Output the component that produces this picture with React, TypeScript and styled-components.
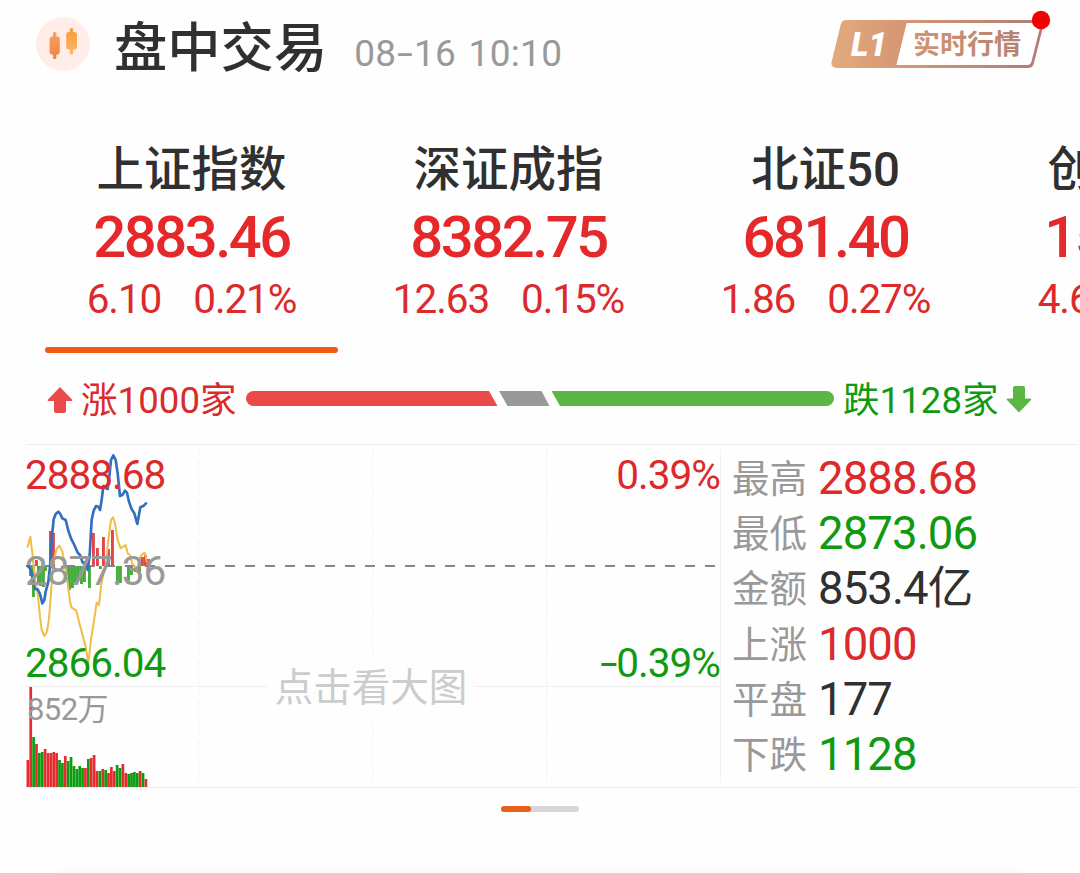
import React from 'react';
import styled, { createGlobalStyle } from 'styled-components';

const RED = '#dc2a2c';
const GREEN = '#109a12';
const DARK = '#303030';
const GREY = '#999';
const LINE = '#efefef';

const GlobalStyle = createGlobalStyle`
  body {
    margin: 0;
    background: #fff;
    font-family: Roboto, 'Noto Sans CJK SC', sans-serif;
    overflow: hidden;
  }
`;

const Page = styled.div`
  display: flex;
  flex-direction: column;
  width: 1080px;
  height: 873px;
  overflow: hidden;
  background: #fefefe;
`;

const Header = styled.header`
  display: flex;
  align-items: center;
  height: 94px;
  padding: 0 29px 0 36px;
`;

const CandleIcon = styled.svg`
  margin: 0 24px 6px 0;
`;

const Title = styled.h1`
  margin: 3px 27px 0 0;
  font-size: 53.3px;
  line-height: 60px;
  font-weight: 500;
  color: ${DARK};
`;

const Time = styled.span`
  margin-top: 13px;
  font-size: 37px;
  line-height: 44px;
  letter-spacing: 0.3px;
  word-spacing: 3px;
  color: ${GREY};
`;

// the plain hyphen is too short next to tall figures
const Dash = styled.span`
  display: inline-block;
  margin: 0 3.5px;
  transform: scaleX(1.55);
`;

const Badge = styled.svg`
  margin: 0 0 14px auto;
`;

const Indices = styled.section`
  display: flex;
  height: 259px;
  margin-left: 33px;
  overflow: hidden;
`;

const IndexTab = styled.div`
  display: flex;
  flex: 0 0 317px;
  flex-direction: column;
  align-items: center;
  padding-top: 46px;
  white-space: nowrap;
`;

const IndexName = styled.div`
  font-size: 47.5px;
  line-height: 60px;
  font-weight: 500;
  color: ${DARK};
`;

const IndexPrice = styled.div`
  margin-top: 2px;
  font-size: 58px;
  line-height: 70px;
  font-weight: 500;
  letter-spacing: -2.5px;
  color: #e5292b;
`;

const IndexChange = styled.div`
  display: flex;
  gap: 32px;
  margin-top: 3px;
  font-size: 40.5px;
  line-height: 48px;
  letter-spacing: -1.1px;
  color: ${RED};
`;

const Underline = styled.div`
  width: 293px;
  height: 6px;
  margin-top: 24px;
  border-radius: 3px;
  background: #f05a14;
`;

const Breadth = styled.section`
  display: flex;
  align-items: center;
  height: 91px;
  padding: 0 47px;
`;

const BreadthText = styled.span`
  flex: none;
  width: 155px;
  margin: 5px 0 0 8px;
  font-size: 36.5px;
  line-height: 44px;
  white-space: nowrap;
  letter-spacing: 0.1px;
  color: ${props => props.color};
`;

const BreadthBar = styled.svg`
  flex: none;
  margin: 0 1px 0 10px;
`;

const ArrowIcon = styled.svg`
  flex: none;
`;

const Panel = styled.section`
  display: flex;
  width: 1052px;
  height: 342px;
  margin-left: 26px;
  border-top: 1px solid ${LINE};
  border-bottom: 1px solid ${LINE};
`;

const ChartArea = styled.div`
  position: relative;
  width: 695px;
  height: 342px;
`;

const Chart = styled.svg`
  display: block;
`;

type AxisProps = {
  $top: number,
  $right?: boolean,
};

const AxisLabel = styled.span<AxisProps>`
  position: absolute;
  top: ${props => props.$top}px;
  ${props => (props.$right ? 'right: 1px;' : 'left: -1px;')}
  font-size: 40.5px;
  line-height: 48px;
  letter-spacing: -1px;
  color: ${props => props.color};
`;

const VolumeLabel = styled(AxisLabel)`
  left: 1px;
  font-size: 31px;
  line-height: 40px;
  letter-spacing: -0.6px;
`;

const Hint = styled.span`
  position: absolute;
  top: 216px;
  left: 242px;
  width: 206px;
  font-size: 38.5px;
  line-height: 54px;
  text-align: center;
  white-space: nowrap;
  background: #fefefe;
  color: #ccc;
`;

const Stats = styled.div`
  display: flex;
  flex-direction: column;
  padding: 6px 0 0 11px;
`;

const StatRow = styled.div`
  display: flex;
  align-items: center;
  height: 55.3px;
  line-height: 54px;
`;

const StatLabel = styled.span`
  width: 86px;
  font-size: 37.5px;
  color: ${GREY};
`;

const StatValue = styled.span`
  font-size: 45.5px;
  letter-spacing: -0.9px;
  color: ${props => props.color};
`;

const Pager = styled.div`
  width: 78px;
  height: 6px;
  margin: 18px 0 0 501px;
  border-radius: 3px;
  background: #d6d7d9;
`;

const PagerThumb = styled.div`
  width: 30px;
  height: 6px;
  border-radius: 3px;
  background: #e8601a;
`;

const CardEdge = styled.div`
  height: 5px;
  margin: 56px 58px 0;
  background: #fbfbfc;
`;

type Index = {
  name: string,
  price: string,
  change: string,
  percent: string,
};

const indices: Index[] = [
  { name: '上证指数', price: '2883.46', change: '6.10', percent: '0.21%' },
  { name: '深证成指', price: '8382.75', change: '12.63', percent: '0.15%' },
  { name: '北证50', price: '681.40', change: '1.86', percent: '0.27%' },
  { name: '创业板指', price: '1589.46', change: '4.63', percent: '0.29%' },
];

const stats = [
  { label: '最高', value: '2888.68', color: RED },
  { label: '最低', value: '2873.06', color: GREEN },
  { label: '金额', value: '853.4亿', color: DARK },
  { label: '上涨', value: '1000', color: RED },
  { label: '平盘', value: '177', color: DARK },
  { label: '下跌', value: '1128', color: GREEN },
];

// direction and height of every minute's volume
const volumes: [string, number][] = [
  ['r', 27], ['r', 100], ['g', 50], ['r', 43], ['g', 34], ['g', 35], ['r', 38],
  ['r', 34], ['r', 34], ['r', 35], ['r', 34], ['g', 27], ['g', 24], ['r', 31],
  ['g', 26], ['g', 30], ['g', 21], ['g', 18], ['g', 21], ['g', 19], ['r', 19],
  ['g', 28], ['r', 29], ['r', 32], ['r', 16], ['g', 16], ['r', 18], ['g', 17],
  ['r', 14], ['r', 20], ['r', 16], ['g', 22], ['g', 19], ['r', 23], ['r', 14],
  ['g', 13], ['g', 14], ['g', 15], ['g', 14], ['r', 16], ['g', 14], ['r', 8],
];

// x and signed height around the previous close
const momentum: [number, number][] = [
  [2, -10], [5, -31], [8, 6], [10, -17], [12, -20], [15, -21], [17, -5], [22, 35],
  [25, 33], [34, -3], [38, -9], [41, -24], [44, -22], [47, -17], [50, -14],
  [53, -18], [56, -16], [61, -22], [65, 33], [69, 18], [72, -3], [75, 29],
  [80, 17], [84, 36], [89, -16], [92, -17], [100, -18], [103, -9], [107, -6],
  [111, -8], [114, 9], [117, 11], [120, 7],
];

const priceLine = '38,378 45,385 50,400 55,430 60,447 68,448 75,462 82,490 88,480 92,455 100,425 105,380 110,300 116,238 122,222 130,215 136,222 142,235 152,240 160,272 168,295 178,315 188,338 195,345 203,368 212,368 218,390 224,345 230,240 236,212 243,198 250,200 255,210 260,180 265,138 272,145 278,147 283,110 288,60 295,46 302,60 308,100 315,168 322,165 330,152 336,158 342,185 350,208 358,220 367,252 376,202 385,198 393,190';
const averageLine = '38,320 46,290 52,340 56,380 62,425 68,460 75,530 80,570 88,588 96,575 102,535 108,460 113,380 120,345 126,325 133,317 142,335 150,375 158,430 165,485 170,503 184,512 192,545 200,575 212,620 220,668 228,600 238,535 245,488 252,495 258,440 265,400 272,380 280,300 288,240 294,232 300,250 308,300 317,325 332,315 338,340 345,345 352,372 360,380 367,385 376,350 385,340 390,340 395,365';

const IndexChart = () => (
  <Chart width="695" height="342" viewBox="26 445 695 342" fill="none">
    <path d="M26 686.5H720" stroke={LINE} />
    <path d="M198.5 449V783M372.5 449V783M546.5 449V783" stroke="#f3f3f3" strokeDasharray="7 3" />
    <path d="M720.5 449V783" stroke="#f3f3f3" />
    {momentum.map(([x, value]) => (
      <rect
        key={x}
        x={27 + x}
        y={value > 0 ? 566 - value : 566}
        width="2.9"
        height={Math.abs(value)}
        fill={value > 0 ? '#e0474b' : '#46ad3a'}
      />
    ))}
    <path d="M25 566H720" stroke="#858585" strokeWidth="2" strokeDasharray="10 10" />
    {volumes.map(([side, height], i) => (
      <rect
        key={i}
        x={26.5 + i * 2.88}
        y={787 - height}
        width="2.7"
        height={height}
        fill={side === 'r' ? '#e52d31' : '#0c9c10'}
      />
    ))}
    <g transform="translate(15 440) scale(0.33333)" strokeLinejoin="round" strokeLinecap="round">
      <polyline points={averageLine} stroke="#f0bd45" strokeWidth="6" />
      <polyline points={priceLine} stroke="#3270bd" strokeWidth="8" />
    </g>
  </Chart>
);

const App = () => {
  return (
    <Page>
      <GlobalStyle />
      <Header>
        <CandleIcon width="54" height="54" viewBox="36 17 54 54">
          <defs>
            <linearGradient id="candleLeft" gradientUnits="userSpaceOnUse" x1="0" y1="32" x2="0" y2="59">
              <stop offset="0" stopColor="#f9a25e" />
              <stop offset="1" stopColor="#f47f42" />
            </linearGradient>
            <linearGradient id="candleRight" gradientUnits="userSpaceOnUse" x1="0" y1="28" x2="0" y2="54">
              <stop offset="0" stopColor="#f89a3c" />
              <stop offset="1" stopColor="#fcb766" />
            </linearGradient>
          </defs>
          <circle cx="63" cy="44" r="27" fill="#feeee7" />
          <g fill="url(#candleLeft)">
            <rect x="53" y="32" width="3.4" height="27" rx="1.5" />
            <rect x="49.600" y="36.500" width="10.200" height="18" rx="2.800" />
          </g>
          <g fill="url(#candleRight)">
            <rect x="69.800" y="28" width="3.400" height="26.500" rx="1.500" />
            <rect x="66.200" y="32" width="10.800" height="17.500" rx="2.800" />
          </g>
        </CandleIcon>
        <Title>盘中交易</Title>
        <Time>08<Dash>-</Dash>16 10:10</Time>
        <Badge width="221" height="62" viewBox="830 9 221 62">
          <defs>
            <linearGradient id="bronze" gradientUnits="userSpaceOnUse" x1="832" y1="0" x2="1044" y2="0">
              <stop offset="0" stopColor="#e3aa7e" />
              <stop offset="0.35" stopColor="#d59673" />
              <stop offset="1" stopColor="#ad7e72" />
            </linearGradient>
          </defs>
          <path d="M846 21.500H1043L1032.500 63Q1031.500 66.500 1028 66.500H837Q832 66.500 833 62L842 25Q843 21.500 846 21.500Z" fill="#fff" stroke="url(#bronze)" strokeWidth="2.800" />
          <path d="M846 21.500H907L896 66.500H837Q832 66.500 833 62L842 25Q843 21.500 846 21.500Z" fill="url(#bronze)" />
          <text x="851" y="56" fontSize="33" fontWeight="900" fontStyle="italic" textLength="36" fill="#fff">L1</text>
          <text x="913" y="54" fontSize="27" fontWeight="700" fill="url(#bronze)">实时行情</text>
          <circle cx="1041" cy="20" r="9.200" fill="#f10000" />
        </Badge>
      </Header>
      <Indices>
        {indices.map((item, i) => (
          <IndexTab key={item.name}>
            <IndexName>{item.name}</IndexName>
            <IndexPrice>{item.price}</IndexPrice>
            <IndexChange>
              <span>{item.change}</span>
              <span>{item.percent}</span>
            </IndexChange>
            {i === 0 && <Underline />}
          </IndexTab>
        ))}
      </Indices>
      <Breadth>
        <ArrowIcon width="26" height="28" viewBox="0 0 26 28">
          <path d="M13 2L25 14.500Q26 16 24 16H19V26Q19 28 17 28H9Q7 28 7 26V16H2Q0 16 1 14.500Z" fill="#e94b4d" />
        </ArrowIcon>
        <BreadthText color={RED}>涨1000家</BreadthText>
        <BreadthBar width="588" height="15" viewBox="246 391 588 15">
          <path d="M253.500 391H489L497.500 406H253.500a7.500 7.500 0 0 1 0-15Z" fill="#ec4949" />
          <path d="M499 391H541.500L549.500 406H507.500Z" fill="#999" />
          <path d="M551.500 391H826.500a7.500 7.500 0 0 1 0 15H560Z" fill="#5ab645" />
        </BreadthBar>
        <BreadthText color={GREEN}>跌1128家</BreadthText>
        <ArrowIcon width="34" height="28" viewBox="-8 0 34 28">
          <path d="M13 27.500L25 15Q26 13.500 24 13.500H19V3Q19 1 17 1H9Q7 1 7 3V13.500H2Q0 13.500 1 15Z" fill="#5ab645" />
        </ArrowIcon>
      </Breadth>
      <Panel>
        <ChartArea>
          <IndexChart />
          <AxisLabel $top={6} color={RED}>2888.68</AxisLabel>
          <AxisLabel $top={102} color={GREY}>2877.36</AxisLabel>
          <AxisLabel $top={194} color={GREEN}>2866.04</AxisLabel>
          <AxisLabel $top={6} $right color={RED}>0.39%</AxisLabel>
          <AxisLabel $top={194} $right color={GREEN}><Dash>-</Dash>0.39%</AxisLabel>
          <VolumeLabel $top={245} color={GREY}>852万</VolumeLabel>
          <Hint>点击看大图</Hint>
        </ChartArea>
        <Stats>
          {stats.map(item => (
            <StatRow key={item.label}>
              <StatLabel>{item.label}</StatLabel>
              <StatValue color={item.color}>{item.value}</StatValue>
            </StatRow>
          ))}
        </Stats>
      </Panel>
      <Pager>
        <PagerThumb />
      </Pager>
      <CardEdge />
    </Page>
  );
};

export default App;
